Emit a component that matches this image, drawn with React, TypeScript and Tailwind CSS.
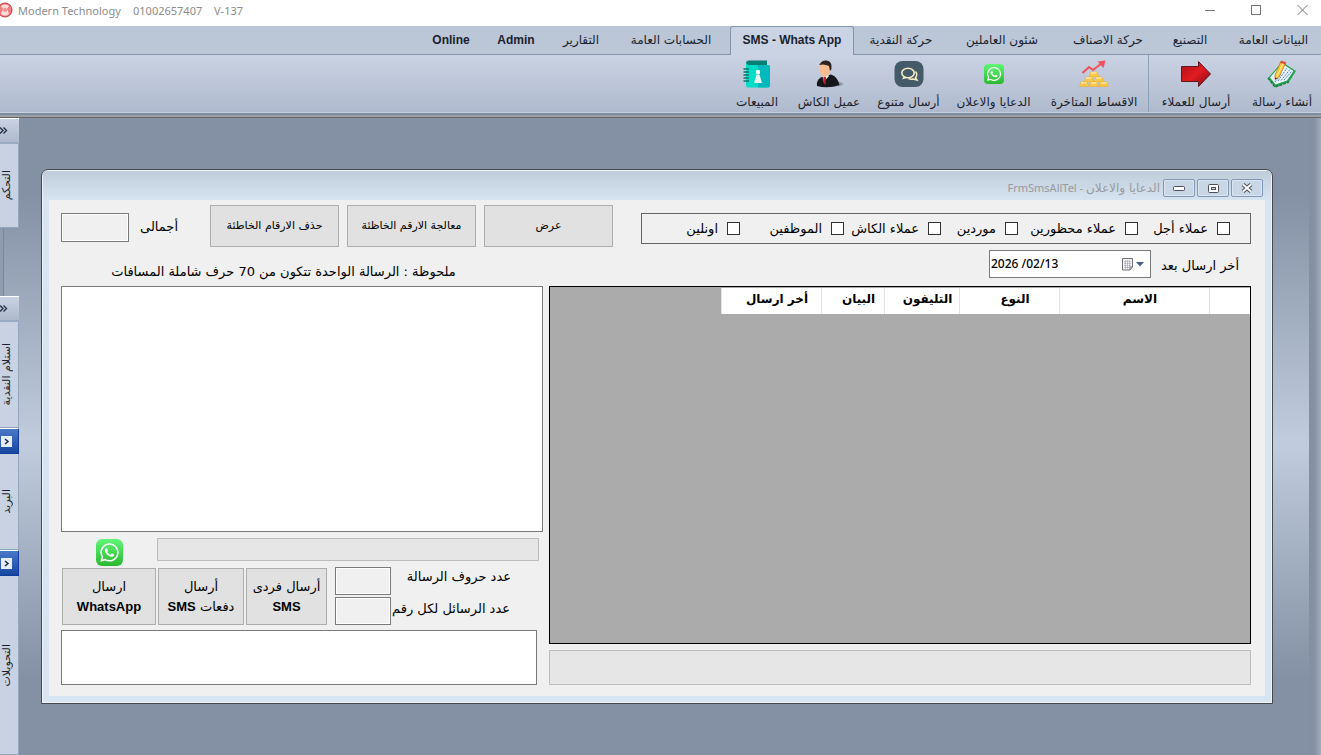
import type { ReactNode } from 'react';
import { FaWhatsapp } from 'react-icons/fa';

interface TabItem {
    label: string;
    width: string;
    latin?: boolean;
    active?: boolean;
}

const tabs: TabItem[] = [
    { label: 'البيانات العامة', width: 'w-[95px]' },
    { label: 'التصنيع', width: 'w-[72px]' },
    { label: 'حركة الاصناف', width: 'w-[92px]' },
    { label: 'شئون العاملين', width: 'w-[120px]' },
    { label: 'حركة النقدية', width: 'w-[88px] pl-[6px]' },
    { label: 'SMS - Whats App', width: 'w-[124px]', latin: true, active: true },
    { label: 'الحسابات العامة', width: 'w-[118px]' },
    { label: 'التقارير', width: 'w-[62px]' },
    { label: 'Admin', width: 'w-[68px]', latin: true },
    { label: 'Online', width: 'w-[62px]', latin: true },
];

function WhatsAppIcon({ size }: { size: 'small' | 'large' }) {
    return (
        <span
            className={`flex items-center justify-center bg-linear-to-b from-[#5ff777] to-[#2bb82f] text-white ${
                size === 'small' ? 'size-5 rounded-[4px]' : 'size-[27px] rounded-[6px]'
            }`}
        >
            <FaWhatsapp className={size === 'small' ? 'size-4' : 'size-[21px]'} />
        </span>
    );
}

function NoteIcon() {
    return (
        <svg width="30" height="28" viewBox="0 0 30 28">
            <path d="M1 18 L15 2 L29 11 L22 22 L8 27 Z" fill="#25a050" />
            <path d="M3 17.500 L15 3.500 L26.500 11 L20 20.500 L8.500 24.500 Z" fill="#e6f1fa" />
            <path d="M11 21 L20 8 M14 20.500 L23 9.500 M17 20 L25 11 M8 22 L14 14" stroke="#5488ba" strokeWidth="1" strokeDasharray="2 1" />
            <path d="M1 18 L8 27 L22 22" fill="none" stroke="#14803c" strokeWidth="1.500" strokeDasharray="3 1" />
            <path d="M14 1 L19 2.500 L12 17 L8 19.500 L8 15 Z" fill="#fbc93a" stroke="#b9721b" strokeWidth="0.700" />
            <path d="M14 1 L19 2.500 L18 4.500 L13.300 3 Z" fill="#e0463c" />
            <path d="M16 3.500 L10 16.500" stroke="#fff0a0" strokeWidth="1" />
            <path d="M8 17.500 L10 18.300 L8 19.500 Z" fill="#333" />
        </svg>
    );
}

function ArrowIcon() {
    return (
        <svg width="32" height="28" viewBox="0 0 32 28">
            <defs>
                <linearGradient id="red-arrow" x1="0" y1="0" x2="1" y2="1">
                    <stop offset="0" stopColor="#a81218" />
                    <stop offset="0.5" stopColor="#e31b22" />
                    <stop offset="1" stopColor="#7d0c12" />
                </linearGradient>
            </defs>
            <path d="M1.500 6.500 H18.500 V1.500 L30.500 14 L18.500 26.500 V21.500 H1.500 Z" fill="url(#red-arrow)" stroke="#5f1a1d" />
        </svg>
    );
}

function GoldIcon() {
    return (
        <svg width="30" height="28" viewBox="0 0 30 28">
            <path d="M3.500 13 L10 7 L14 10 L23 3" fill="none" stroke="#f4505b" strokeWidth="2" />
            <path d="M18.500 1.500 L26.500 0.500 L24.500 8 Z" fill="#f4505b" />
            <g fill="#fbc748" stroke="#e9a92f" strokeWidth="0.500">
                <path d="M12 12 H18 L20 17 H10 Z" />
                <path d="M7 17 H13 L15 22 H5 Z" />
                <path d="M17 17 H23 L25 22 H15 Z" />
                <path d="M2 22 H8 L10 26.500 H0.500 Z" />
                <path d="M12 22 H18 L20 26.500 H10 Z" />
                <path d="M22 22 H28 L29.500 26.500 H20 Z" />
            </g>
            <path d="M12 12 H18 L17 14 H12 Z M7 17 H13 L12 19 H7 Z M17 17 H23 L22 19 H17 Z M2 22 H8 L7 24 H2 Z M12 22 H18 L17 24 H12 Z M22 22 H28 L27 24 H22 Z" fill="#ffe08a" />
        </svg>
    );
}

function ChatIcon() {
    return (
        <svg width="30" height="28" viewBox="0 0 30 28">
            <rect x="0.500" y="1" width="29" height="26" rx="8" fill="#455a68" />
            <path d="M21.500 11.500 Q24 15 21.500 17.500 L23 20 L19 19 Q16.500 19.500 14.500 18.500" fill="none" stroke="#f6ebc4" strokeWidth="1.500" />
            <ellipse cx="14" cy="13" rx="6.200" ry="4.700" fill="#455a68" stroke="#f6ebc4" strokeWidth="1.600" />
            <path d="M10 16 L8 19.500 L13.500 17.800 Z" fill="#f6ebc4" />
        </svg>
    );
}

function PersonIcon() {
    return (
        <svg width="30" height="28" viewBox="0 0 30 28">
            <ellipse cx="21" cy="24" rx="8" ry="2.500" fill="#8e98a8" />
            <path d="M3 26 Q2 19 9 16.500 L17 14.500 Q24 17 25.500 25 Q14 29 3 26 Z" fill="#15171a" />
            <path d="M8.500 16 L9.500 22 L15 16 L13 13 Z" fill="#f4f4f4" />
            <path d="M9.500 17 L12 17 L11.500 25 L9 22 Z" fill="#c21f24" />
            <path d="M5.500 6 Q5.500 2 11 2 Q17 2 17 9 Q15 17 10 17 Q5 15 5.500 6 Z" fill="#f8bd92" />
            <path d="M5.500 4.500 Q8 0 12.500 0.500 Q18.500 1 17.500 9 L16 11 L15 6 Q10 3.500 5.500 5 Z" fill="#2c2422" />
        </svg>
    );
}

function ContactsIcon() {
    return (
        <svg width="28" height="28" viewBox="0 0 28 28">
            <path d="M3 3 Q3 0.500 6 0.500 H24 V6 H3 Z" fill="#067f74" />
            <path d="M3 3 L5 5 H25 Q27 5 27 7 V25 Q27 27.500 25 27.500 H5 Q3 27.500 3 25 Z" fill="#00dcc6" />
            <path d="M15 5 H25 Q27 5 27 7 V25 Q27 27.500 25 27.500 H15 Z" fill="#00b9bd" />
            <path d="M0.500 9 H6 M0.500 12 H6 M0.500 15 H6 M0.500 18 H6 M0.500 21 H6" stroke="#0b6f68" strokeWidth="1.300" />
            <circle cx="15" cy="12" r="2.200" fill="#fff" />
            <path d="M13.500 14.500 H16.500 L19 23 H11 Z" fill="#eaf3f3" />
        </svg>
    );
}

function ToolButton({ icon, label, width }: { icon: ReactNode; label: string; width: string }) {
    return (
        <button className={`flex shrink-0 flex-col items-center gap-1 pt-[5px] whitespace-nowrap ${width}`}>
            <span className="flex h-7 items-center">{icon}</span>
            <span className="text-[12px] leading-5">{label}</span>
        </button>
    );
}

function Ribbon() {
    return (
        <header dir="rtl" className="bg-[#bbc6d7] text-[#1a1f2e]">
            <nav className="flex h-[29px] items-end border-b border-[#8595ab] text-[12px]">
                {tabs.map((tab) => (
                    <button
                        key={tab.label}
                        className={`shrink-0 whitespace-nowrap ${tab.width} ${
                            tab.active
                                ? '-mb-px h-[29px] rounded-t-[3px] border border-b-0 border-[#8595ab] bg-[#c9d3e3] pb-[3px]'
                                : 'h-7'
                        } ${tab.latin ? 'font-["Liberation_Sans",sans-serif] font-bold' : ''}`}
                    >
                        {tab.label}
                    </button>
                ))}
            </nav>
            <div className="flex h-[58px] border-b border-[#c5d0e0] bg-linear-to-b from-[#c9d3e3] to-[#b0bace]">
                <ToolButton icon={<NoteIcon />} label="أنشاء رسالة" width="w-[78px]" />
                <ToolButton icon={<ArrowIcon />} label="أرسال للعملاء" width="w-[94px]" />
                <div className="w-px shrink-0 bg-[#8fa0b9]" />
                <ToolButton icon={<GoldIcon />} label="الاقساط المتاخرة" width="w-[108px]" />
                <ToolButton icon={<WhatsAppIcon size="small" />} label="الدعايا والاعلان" width="w-[93px]" />
                <ToolButton icon={<ChatIcon />} label="أرسال متنوع" width="w-[77px]" />
                <ToolButton icon={<PersonIcon />} label="عميل الكاش" width="w-[82px]" />
                <ToolButton icon={<ContactsIcon />} label="المبيعات" width="w-[62px]" />
            </div>
            <div className="h-[5px] border-t-2 border-b border-t-[#7f8ca0] border-b-[#6b6665] bg-[#9b9fa6]" />
        </header>
    );
}

function DockPanel({ label, height, pinned }: { label: string; height: string; pinned?: boolean }) {
    return (
        <section className={`flex flex-col ${height}`}>
            <button
                aria-label={`فتح ${label}`}
                className={`flex h-[26px] w-full shrink-0 items-center border-t border-t-white ${
                    pinned
                        ? 'border-r border-b border-r-[#123a9c] border-b-[#123a9c] bg-linear-to-b from-[#4a78c8] to-[#1546a0] pl-[1px]'
                        : 'border-b-2 border-b-[#9aabc4] bg-linear-to-b from-[#c9d3e3] to-[#aeb9cd]'
                }`}
            >
                {pinned ? (
                    <svg width="11" height="11" viewBox="0 0 11 11">
                        <rect width="11" height="11" fill="#e6edf8" />
                        <path d="M4 3 L7 5.500 L4 8" fill="none" stroke="#1c2b4a" strokeWidth="1.500" />
                    </svg>
                ) : (
                    <svg width="8" height="9" viewBox="0 0 8 9">
                        <path d="M0 1.500 L3 4.500 L0 7.500 M3.500 1.500 L6.500 4.500 L3.500 7.500" fill="none" stroke="#26334a" strokeWidth="1.400" />
                    </svg>
                )}
            </button>
            <div className="flex flex-1 items-center border-r border-b border-[#94a5c0] bg-[#c8d2e2]">
                <span dir="rtl" className="rotate-180 text-[11px] leading-[13px] whitespace-nowrap text-[#1a1f2e] [writing-mode:vertical-rl]">
                    {label}
                </span>
            </div>
        </section>
    );
}

function SideDock() {
    return (
        <aside className="flex w-[19px] shrink-0 flex-col">
            <DockPanel label="التحكم" height="h-[110px]" />
            <div className="h-[68px] w-1 border-r border-[#7b879a] bg-[#8f9bae]" />
            <DockPanel label="استلام النقدية" height="h-[132px]" />
            <DockPanel label="البريد" height="h-[122px]" pinned />
            <DockPanel label="التحويلات" height="min-h-[205px] flex-1" pinned />
        </aside>
    );
}

function WindowTitle() {
    const button = 'flex h-[18px] w-8 items-center justify-center rounded-[2px] border border-[#8296b8] bg-[#c9d6e5] shadow-[inset_0_0_0_1px_#dce6f0]';
    return (
        <div className="flex h-[29px] items-start justify-end gap-[2px] bg-linear-to-b from-[#bfccda] to-[#d6e3f1] pt-2 pr-2">
            <h1 dir="rtl" className="pr-[1px] text-[12px] leading-[18px] text-[#98999d]">
                <span>الدعايا والاعلان</span>
                <span className="font-['Noto_Sans',sans-serif] text-[11px]"> - FrmSmsAllTel</span>
            </h1>
            <button className={button} aria-label="تصغير">
                <svg width="12" height="6" viewBox="0 0 12 6">
                    <rect x="0.500" y="1.500" width="11" height="4" rx="1" fill="#fff" stroke="#4b4f5c" />
                </svg>
            </button>
            <button className={button} aria-label="تكبير">
                <svg width="11" height="9" viewBox="0 0 11 9">
                    <rect x="0.500" y="0.500" width="10" height="8" rx="1" fill="#fff" stroke="#4b4f5c" />
                    <rect x="3.500" y="3.500" width="4" height="2" fill="#c9d6e5" stroke="#4b4f5c" />
                </svg>
            </button>
            <button className={button} aria-label="إغلاق">
                <svg width="12" height="10" viewBox="0 0 12 10">
                    <path d="M2 1.500 L10 8.500 M10 1.500 L2 8.500" stroke="#4b4f5c" strokeWidth="4" />
                    <path d="M2 1.500 L10 8.500 M10 1.500 L2 8.500" stroke="#fff" strokeWidth="2" />
                </svg>
            </button>
        </div>
    );
}

const filters = [
    { label: 'عملاء أجل', width: 'w-[92px]' },
    { label: 'عملاء محظورين', width: 'w-[120px]' },
    { label: 'موردين', width: 'w-[77px]' },
    { label: 'عملاء الكاش', width: 'w-[97px]' },
    { label: 'الموظفين', width: 'w-[104px]' },
    { label: 'اونلين', width: 'w-[60px]' },
];

function FilterBox() {
    return (
        <div dir="rtl" className="mt-2 flex h-[31px] flex-1 items-center border border-[#646464] pr-5">
            {filters.map((filter) => (
                <label key={filter.label} className={`flex shrink-0 items-center gap-[9px] whitespace-nowrap ${filter.width}`}>
                    <input type="checkbox" className="size-[13px] shrink-0 appearance-none border border-[#333] bg-white checked:bg-[#333]" />
                    {filter.label}
                </label>
            ))}
        </div>
    );
}

const readOnlyBox = 'border border-[#7a7a7a] bg-[#f0f0f0] shadow-[inset_0_0_0_1px_#fff]';
const pushButton = 'border border-[#adadad] bg-[#e1e1e1]';

function TopControls() {
    return (
        <div className="flex h-[42px] items-start">
            <input id="total" readOnly className={`mt-2 h-[29px] w-[68px] shrink-0 ${readOnlyBox}`} />
            <label htmlFor="total" dir="rtl" className="mt-3 w-[81px] shrink-0 pr-8 whitespace-nowrap">أجمالى</label>
            <div className="flex shrink-0 gap-2 text-[11px]">
                <button className={`h-[42px] w-[129px] whitespace-nowrap ${pushButton}`}>حذف الارقام الخاطئة</button>
                <button className={`h-[42px] w-[129px] whitespace-nowrap ${pushButton}`}>معالجة الارقم الخاظئة</button>
                <button className={`h-[42px] w-[129px] whitespace-nowrap ${pushButton}`}>عرض</button>
            </div>
            <div className="w-7 shrink-0" />
            <FilterBox />
        </div>
    );
}

function DateRow() {
    return (
        <div className="flex h-[39px] items-start justify-between pt-[3px] pr-3">
            <p dir="rtl" className="w-[445px] pt-3 text-center">
                ملحوظة : الرسالة الواحدة تتكون من 70 حرف شاملة المسافات
            </p>
            <div className="flex gap-[10px]">
                <div className="flex h-7 w-[162px] items-center border border-[#7a7a7a] bg-white pr-[6px]">
                    <input
                        id="last-sent"
                        defaultValue="2026 /02/13"
                        className="w-full min-w-0 flex-1 pl-[1px] font-['Noto_Sans',sans-serif] text-[12px] font-medium outline-none"
                    />
                    <button aria-label="اختيار التاريخ" className="flex items-center gap-[2px]">
                        <svg width="12" height="13" viewBox="0 0 12 13">
                            <path d="M0.500 0.500 H10.500 V9 L8 12 H0.500 Z" fill="#f3f3f6" stroke="#74707a" />
                            <path d="M2 3.500 H9 M2 5.500 H9 M2 7.500 H9 M2 9.500 H7 M3.500 2 V11 M5.500 2 V11 M7.500 2 V10" stroke="#a3a6b4" strokeWidth="0.600" />
                            <path d="M8 12 V9 H10.500" fill="none" stroke="#74707a" />
                        </svg>
                        <svg width="8" height="5" viewBox="0 0 8 5">
                            <path d="M0 0 H8 L4 4.500 Z" fill="#44608f" />
                        </svg>
                    </button>
                </div>
                <label htmlFor="last-sent" dir="rtl" className="pt-[6px] whitespace-nowrap">أخر ارسال بعد</label>
            </div>
        </div>
    );
}

function MessagePanel() {
    return (
        <div className="flex flex-col">
            <textarea aria-label="نص الرسالة" className="block h-[246px] w-full resize-none border border-[#7a7a7a] bg-white" />
            <div className="mt-[6px] flex h-[29px] items-start pr-1">
                <div className="flex w-24 justify-center pt-px">
                    <WhatsAppIcon size="large" />
                </div>
                <div className="h-[23px] flex-1 border border-[#bcbcbc] bg-[#e6e6e6]" />
            </div>
            <div className="flex h-[58px] pl-[1px]">
                <div className="flex gap-[2px] pt-px">
                    <button dir="rtl" className={`w-[94px] ${pushButton}`}>
                        ارسال
                        <br />
                        <b className="font-['Liberation_Sans',sans-serif]">WhatsApp</b>
                    </button>
                    <button dir="rtl" className={`w-[86px] whitespace-nowrap ${pushButton}`}>
                        أرسال
                        <br />
                        دفعات <b className="font-['Liberation_Sans',sans-serif]">SMS</b>
                    </button>
                    <button dir="rtl" className={`w-[81px] whitespace-nowrap ${pushButton}`}>
                        أرسال فردى
                        <br />
                        <b className="font-['Liberation_Sans',sans-serif]">SMS</b>
                    </button>
                </div>
                <div className="ml-2 flex flex-col gap-[2px]">
                    <div className="flex items-start gap-1">
                        <input id="chars" readOnly className={`h-7 w-14 ${readOnlyBox}`} />
                        <label htmlFor="chars" dir="rtl" className="w-[116px] whitespace-nowrap">عدد حروف الرسالة</label>
                    </div>
                    <div className="flex items-start gap-1">
                        <input id="messages" readOnly className={`h-7 w-14 ${readOnlyBox}`} />
                        <label htmlFor="messages" dir="rtl" className="w-[115px] pt-[2px] whitespace-nowrap">عدد الرسائل لكل رقم</label>
                    </div>
                </div>
            </div>
            <textarea aria-label="النتيجة" className="mt-[5px] block h-[55px] w-[476px] resize-none border border-[#7a7a7a] bg-white" />
        </div>
    );
}

const columns = [
    { label: '', width: 'w-[41px]' },
    { label: 'الاسم', width: 'w-[150px]' },
    { label: 'النوع', width: 'w-[100px]' },
    { label: 'التليفون', width: 'w-[75px]' },
    { label: 'البيان', width: 'w-[63px]' },
    { label: 'أخر ارسال', width: 'w-[100px]' },
];

function RecipientsPanel() {
    return (
        <div className="flex flex-col gap-[6px]">
            <div dir="rtl" className="h-[358px] border border-black bg-[#ababab] pt-px">
                <table className="w-[529px] table-fixed border-collapse bg-white text-[12px] font-bold">
                    <thead>
                        <tr className="h-[26px]">
                            {columns.map((column) => (
                                <th key={column.width} className={`border-l border-[#e3e3e3] p-0 text-center leading-4 ${column.width}`}>
                                    <span className="block pb-1 pl-3 whitespace-nowrap">{column.label}</span>
                                </th>
                            ))}
                        </tr>
                    </thead>
                </table>
            </div>
            <div className="h-[35px] border border-[#bcbcbc] bg-[#e6e6e6]" />
        </div>
    );
}

function MessageWindow() {
    return (
        <div className="mt-[51px] mr-9 mb-[51px] ml-[22px] flex-1 self-start overflow-hidden rounded-t-[7px] border border-[#45484e] bg-[#d7e4f2] text-black shadow-[inset_0_0_0_1px_#eef4fa]">
            <div className="m-px">
                <WindowTitle />
                <div className="mx-[6px] mb-[7px] bg-[#f0f0f0] pt-[5px] pr-[14px] pb-[11px] pl-3 text-[13px] leading-5">
                    <TopControls />
                    <DateRow />
                    <div className="grid grid-cols-[482px_1fr] gap-[6px]">
                        <MessagePanel />
                        <RecipientsPanel />
                    </div>
                </div>
            </div>
        </div>
    );
}

function TitleBar() {
    return (
        <div className="flex h-[26px] items-start justify-between bg-white pr-[13px] font-['Noto_Sans',sans-serif] text-[11px] text-[#8c8c8c]">
            <div className="flex items-center">
                <svg width="13" height="22" viewBox="0 0 13 22">
                    <circle cx="5" cy="10" r="7" fill="#f27c80" stroke="#c23a40" />
                    <path d="M1 6 Q5 3 9 6 L7 9 L9 14 Q5 17 1 14 L3 9 Z" fill="#ffdcdc" />
                    <circle cx="5" cy="10" r="2" fill="#f48d90" />
                </svg>
                <span className="ml-[5px] w-[115px] leading-[22px]">Modern Technology</span>
                <span className="w-[81px]">01002657407</span>
                <span>V-137</span>
            </div>
            <div className="flex h-5 items-center gap-9">
                <button aria-label="تصغير">
                    <svg width="10" height="10" viewBox="0 0 10 10"><path d="M0 5.500 H10" stroke="#777" /></svg>
                </button>
                <button aria-label="تكبير">
                    <svg width="10" height="10" viewBox="0 0 10 10"><rect x="0.500" y="0.500" width="9" height="9" fill="none" stroke="#777" /></svg>
                </button>
                <button aria-label="إغلاق">
                    <svg width="11" height="10" viewBox="0 0 11 10"><path d="M0.500 0 L10.500 10 M10.500 0 L0.500 10" stroke="#777" /></svg>
                </button>
            </div>
        </div>
    );
}

export default function App() {
    return (
        <div className="flex min-h-screen flex-col font-['DejaVu_Sans',sans-serif]">
            <TitleBar />
            <Ribbon />
            <main className="flex flex-1 bg-linear-to-b from-[#8490a3] from-12% via-[#c1cddf] via-51% to-[#8490a3] to-88%">
                <SideDock />
                <MessageWindow />
                <div className="w-3 shrink-0 bg-linear-to-r from-[#8490a1] from-40% to-[#a0acbc]" />
            </main>
        </div>
    );
}
